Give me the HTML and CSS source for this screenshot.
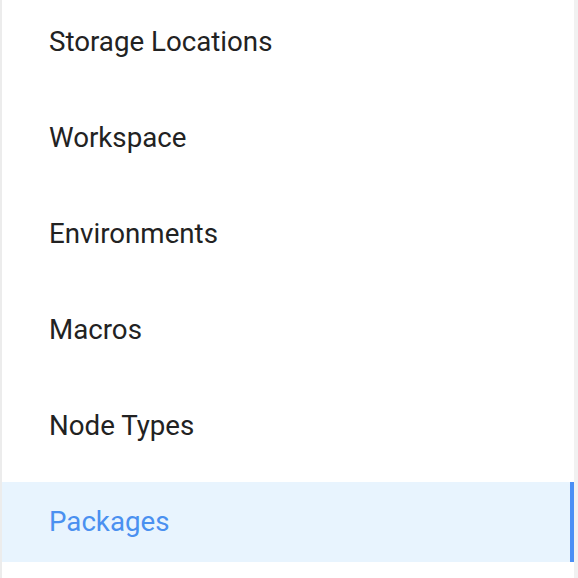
FILE: index.html
```html
<!DOCTYPE html>
<html>
<head>
<meta charset="utf-8">
<link rel="stylesheet" href="styles.css">
</head>
<body>
<div class="frame">
  <nav class="menu">
    <div class="item">Storage Locations</div>
    <div class="item">Workspace</div>
    <div class="item">Environments</div>
    <div class="item">Macros</div>
    <div class="item">Node Types</div>
    <div class="item active">Packages</div>
  </nav>
  <div class="track"></div>
</div>
</body>
</html>
```
FILE: styles.css
```css
html, body {
  margin: 0;
  padding: 0;
  background: #ffffff;
}
.frame {
  display: flex;
  height: 578px;
  border-left: 2px solid #ececec;
  box-sizing: border-box;
  overflow: hidden;
}
.menu {
  flex: 1;
  display: flex;
  flex-direction: column;
  gap: 16px;
  padding-top: 2px;
}
.item {
  height: 80px;
  display: flex;
  align-items: center;
  padding-left: 47px;
  padding-bottom: 2px;
  font-family: Roboto, "Noto Sans", sans-serif;
  font-size: 27.7px;
  color: #222222;
  box-sizing: border-box;
}
.item.active {
  background: #e8f4fe;
  color: #4a90f0;
  border-right: 4px solid #4a8ff5;
}
.track {
  width: 4px;
  background: #f1f1f1;
}
```
